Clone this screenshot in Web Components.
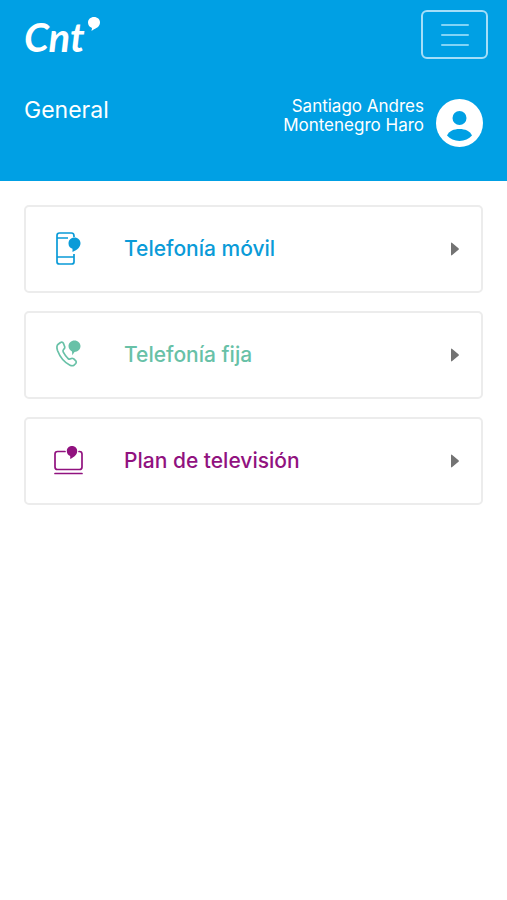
<!DOCTYPE html>
<html lang="es">
<head>
    <meta charset="UTF-8">
    <meta name="viewport" content="width=device-width, initial-scale=1.0">
    <title>General</title>
    <style>
    body {
        margin: 0;
        background: #fff;
        font-family: Inter, "Liberation Sans", sans-serif;
    }
    </style>
</head>
<body>
    <app-header>
        <brand-logo slot="brand"></brand-logo>
        <menu-button slot="menu"></menu-button>
        <span slot="title">General</span>
        <user-badge slot="user">Santiago Andres Montenegro Haro</user-badge>
    </app-header>
    <service-list>
        <service-card icon="mobile" style="--accent: #0a9bd8;">Telefonía móvil</service-card>
        <service-card icon="phone" style="--accent: #68c1a7;">Telefonía fija</service-card>
        <service-card icon="tv" style="--accent: #91127f;">Plan de televisión</service-card>
    </service-list>
    <script>
        class BaseElement extends HTMLElement {
            constructor() {
                super();
                this.attachShadow({ mode: 'open' }).innerHTML = this.render();
            }
        }

        class AppHeader extends BaseElement {
            render() {
                return `
                <style>
                :host {
                    display: block;
                    box-sizing: border-box;
                    min-height: 181px;
                    padding: 10px 19px 32px 24px;
                    background: #00a0e4;
                    color: #fff;
                }
                .row {
                    display: flex;
                    justify-content: space-between;
                    align-items: flex-start;
                }
                .info {
                    margin-top: 36px;
                    padding-right: 5px;
                }
                h1 {
                    margin: 0;
                    font-size: 23px;
                    line-height: 30px;
                    font-weight: 400;
                }
                </style>
                <header>
                    <div class="row"><slot name="brand"></slot><slot name="menu"></slot></div>
                    <div class="row info"><h1><slot name="title"></slot></h1><slot name="user"></slot></div>
                </header>`;
            }
        }

        class BrandLogo extends BaseElement {
            render() {
                return `
                <style>
                :host { display: block; }
                a {
                    display: flex;
                    align-items: flex-start;
                    gap: 2px;
                    padding-top: 7px;
                    color: #fff;
                    font: italic 700 40px/40px Lato, sans-serif;
                    text-decoration: none;
                }
                svg { display: block; }
                </style>
                <a href="#">Cnt<svg width="14" height="15" viewBox="0 0 14 15" aria-hidden="true">
                    <path fill="#fff" d="M7 0C10.500 0 13 2.300 13 5.300 13 9 10.300 11 7 12.200L4.500 14 5 11C2.500 10.200 1 8.200 1 5.600 1 2.300 3.600 0 7 0Z"/>
                </svg></a>`;
            }
        }

        class MenuButton extends BaseElement {
            render() {
                return `
                <style>
                :host { display: block; }
                button {
                    display: flex;
                    align-items: center;
                    justify-content: center;
                    box-sizing: border-box;
                    width: 67px;
                    height: 49px;
                    padding: 0;
                    border: 2px solid #a5def8;
                    border-radius: 6px;
                    background: none;
                    cursor: pointer;
                }
                </style>
                <button type="button" aria-label="Menú">
                    <svg width="30" height="24" viewBox="0 0 30 24" fill="none" stroke="#82d4f6" stroke-width="2" stroke-linecap="round">
                        <path d="M2 2H28M2 12H28M2 22H28"/>
                    </svg>
                </button>`;
            }
        }

        class UserBadge extends BaseElement {
            render() {
                return `
                <style>
                :host {
                    display: flex;
                    align-items: center;
                    gap: 12px;
                }
                .name {
                    max-width: 150px;
                    padding-bottom: 10px;
                    font-size: 17px;
                    line-height: 19px;
                    text-align: right;
                }
                svg { margin-top: 4px; }
                </style>
                <span class="name"><slot></slot></span>
                <svg width="47" height="48" viewBox="0 0 47 48" aria-hidden="true">
                    <ellipse cx="23.500" cy="24" rx="23.500" ry="24" fill="#fff"/>
                    <circle cx="23.500" cy="19" r="7" fill="#00a0e4"/>
                    <path fill="#00a0e4" d="M11 36.500C13 32 18 30 23.500 30S34 32 36 36.500C33 39.800 28.500 42 23.500 42S14 39.800 11 36.500Z"/>
                </svg>`;
            }
        }

        class ServiceList extends BaseElement {
            render() {
                return `
                <style>
                :host {
                    display: block;
                    padding: 24px;
                }
                nav {
                    display: grid;
                    gap: 18px;
                }
                </style>
                <nav><slot></slot></nav>`;
            }
        }

        const icons = {
            mobile: `
                <g fill="none" stroke="currentColor" stroke-width="1.700">
                    <path d="M22 7V6Q22 3 19.500 3H7.500Q5 3 5 5.500V32Q5 34 7.500 34H19.500Q22 34 22 32V24"/>
                    <path d="M5 8H16M5 27H22"/>
                </g>
                <path fill="currentColor" d="M22.500 7.500C25.900 7.500 28.500 10 28.500 13.300 28.500 17 25.600 19.700 20.500 22V18.800C18.200 17.900 16.500 16.200 16.500 13.400 16.500 10 19.100 7.500 22.500 7.500Z"/>`,
            phone: `
                <path fill="none" stroke="currentColor" stroke-width="1.700" stroke-linejoin="round" d="M6.200 8.200L8.500 6.500Q10.500 5.500 11.500 7.500L12.800 11Q13 12.500 11.500 13.500 10.500 14.500 11.300 16.200 13 19.500 16 22.500 17.500 23.800 18.800 22.700 20 21.800 21.500 22.700L23.800 24.800Q24.800 26 23.800 27.500L22 29.200Q20.300 30.300 18 29.200 9.500 25 5.500 14.500C4.500 11.500 4.700 9.500 6.200 8.200Z"/>
                <path fill="currentColor" d="M22.500 4.500C25.900 4.500 28.500 7 28.500 10 28.500 13.800 25.500 15.500 22.500 16L20.300 19.300 20 15.500C18 14.400 16.500 12.600 16.500 10 16.500 7 19.100 4.500 22.500 4.500Z"/>`,
            tv: `
                <g fill="none" stroke="currentColor" stroke-width="1.700" stroke-linecap="round">
                    <path d="M13 9.500H5.500Q3 9.500 3 12V25Q3 27.500 5.500 27.500H27.500Q30 27.500 30 25V12Q30 9.500 27.500 9.500H27"/>
                    <path d="M3 31.500H30"/>
                </g>
                <path fill="currentColor" d="M20 4C23.100 4 25.200 6.200 25.200 9 25.200 12.700 22.500 14.700 18.200 17V14C16.200 13.200 14.800 11.500 14.800 9 14.800 6.200 16.900 4 20 4Z"/>`
        };

        class ServiceCard extends BaseElement {
            render() {
                return `
                <style>
                :host { display: block; }
                a {
                    display: grid;
                    grid-template-columns: 34px 1fr auto;
                    align-items: center;
                    column-gap: 38px;
                    box-sizing: border-box;
                    min-height: 88px;
                    padding: 0 22px 0 26px;
                    border: 2px solid #ececec;
                    border-radius: 5px;
                    color: var(--accent);
                    font-size: 21px;
                    font-weight: 500;
                    line-height: 32px;
                    text-decoration: none;
                }
                svg { display: block; }
                .arrow { fill: #737373; }
                </style>
                <a href="#">
                    <svg class="icon" width="34" height="38" viewBox="0 0 34 38" aria-hidden="true"></svg>
                    <slot></slot>
                    <svg class="arrow" width="8" height="14" viewBox="0 0 8 14" aria-hidden="true">
                        <path d="M0 1.500Q0 0 1.200 1L7.500 6.200Q8.300 7 7.500 7.800L1.200 13Q0 14 0 12.500Z"/>
                    </svg>
                </a>`;
            }

            connectedCallback() {
                this.shadowRoot.querySelector('.icon').innerHTML = icons[this.getAttribute('icon')];
            }
        }

        customElements.define('app-header', AppHeader);
        customElements.define('brand-logo', BrandLogo);
        customElements.define('menu-button', MenuButton);
        customElements.define('user-badge', UserBadge);
        customElements.define('service-list', ServiceList);
        customElements.define('service-card', ServiceCard);
    </script>
</body>
</html>
